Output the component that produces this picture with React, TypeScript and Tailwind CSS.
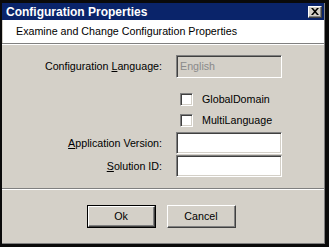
import React from 'react';

const sunken = 'border border-t-[#808080] border-l-[#808080] border-b-white border-r-white shadow-[inset_1px_1px_0_#404040,inset_-1px_-1px_0_#d4d0c8]';
const raised = 'border border-t-white border-l-white border-b-[#404040] border-r-[#404040] shadow-[inset_-1px_-1px_0_#808080]';

const Label: React.FC<{ pre?: string; u: string; rest: string }> = ({ pre = '', u, rest }) => (
  <span className="w-[160px] text-right shrink-0 pr-[1px]">
    {pre}
    <span className="underline underline-offset-[1px]">{u}</span>
    {rest}
  </span>
);

const Check: React.FC<{ label: string }> = ({ label }) => (
  <div className="flex items-center">
    <span className={`w-[13px] h-[13px] bg-white ${sunken}`} />
    <span className="ml-[9px]">{label}</span>
  </div>
);

export default function App() {
  return (
    <div
      className="w-[329px] h-[247px] bg-[#0a0a0a] pt-[3px] pl-[2px] pr-[4px] pb-[3px] text-black text-[10.7px] leading-none"
      style={{ fontFamily: '"Liberation Sans", Arial, sans-serif' }}
    >
      <div className="h-full flex flex-col bg-[#d4d0c8] border-b border-r border-[#808080]">
        {/* title bar */}
        <div className="h-[17px] bg-[#0a246a] flex items-center justify-between pl-[4px] pr-[2px]">
          <span className="text-white font-bold text-[12px]">Configuration Properties</span>
          <span className={`w-[14px] h-[12px] bg-[#d4d0c8] flex items-center justify-center ${raised}`}>
            <svg width="8" height="7" viewBox="0 0 8 7">
              <path d="M0 0h2l2 2.3L6 0h2L5 3.5 8 7H6L4 4.7 2 7H0l3-3.5z" fill="#000" />
            </svg>
          </span>
        </div>

        {/* header */}
        <div className="h-[23px] bg-white border-l border-[#d4d0c8] flex items-center pl-[13px]">
          Examine and Change Configuration Properties
        </div>
        <div className="h-[1px] bg-[#808080]" />
        <div className="h-[1px] bg-white" />

        {/* form */}
        <div className="flex flex-col pl-[1px] pt-[10px]">
          <div className="flex items-center gap-[13px]">
            <Label pre="Configuration " u="L" rest="anguage:" />
            <div className={`w-[106px] h-[23px] bg-[#d4d0c8] flex items-center pl-[3px] text-[#8a8a8a] ${sunken}`}>
              English
            </div>
          </div>

          <div className="flex flex-col gap-[8px] pl-[177px] mt-[15px]">
            <Check label="GlobalDomain" />
            <Check label="MultiLanguage" />
          </div>

          <div className="flex items-center gap-[13px] mt-[5px]">
            <Label u="A" rest="pplication Version:" />
            <div className={`w-[106px] h-[22px] bg-white ${sunken}`} />
          </div>
          <div className="flex items-center gap-[13px] mt-[1px]">
            <Label u="S" rest="olution ID:" />
            <div className={`w-[106px] h-[22px] bg-white ${sunken}`} />
          </div>
        </div>

        <div className="mt-[11px] h-[1px] bg-[#808080]" />
        <div className="h-[1px] bg-white" />

        {/* buttons */}
        <div className="flex justify-center gap-[11px] mt-[15px] pr-[4px]">
          <button className="w-[69px] h-[23px] border border-black p-0">
            <span className={`w-full h-full flex items-center justify-center bg-[#d4d0c8] ${raised}`}>Ok</span>
          </button>
          <button className={`w-[69px] h-[23px] bg-[#d4d0c8] flex items-center justify-center ${raised}`}>
            Cancel
          </button>
        </div>
      </div>
    </div>
  );
}
